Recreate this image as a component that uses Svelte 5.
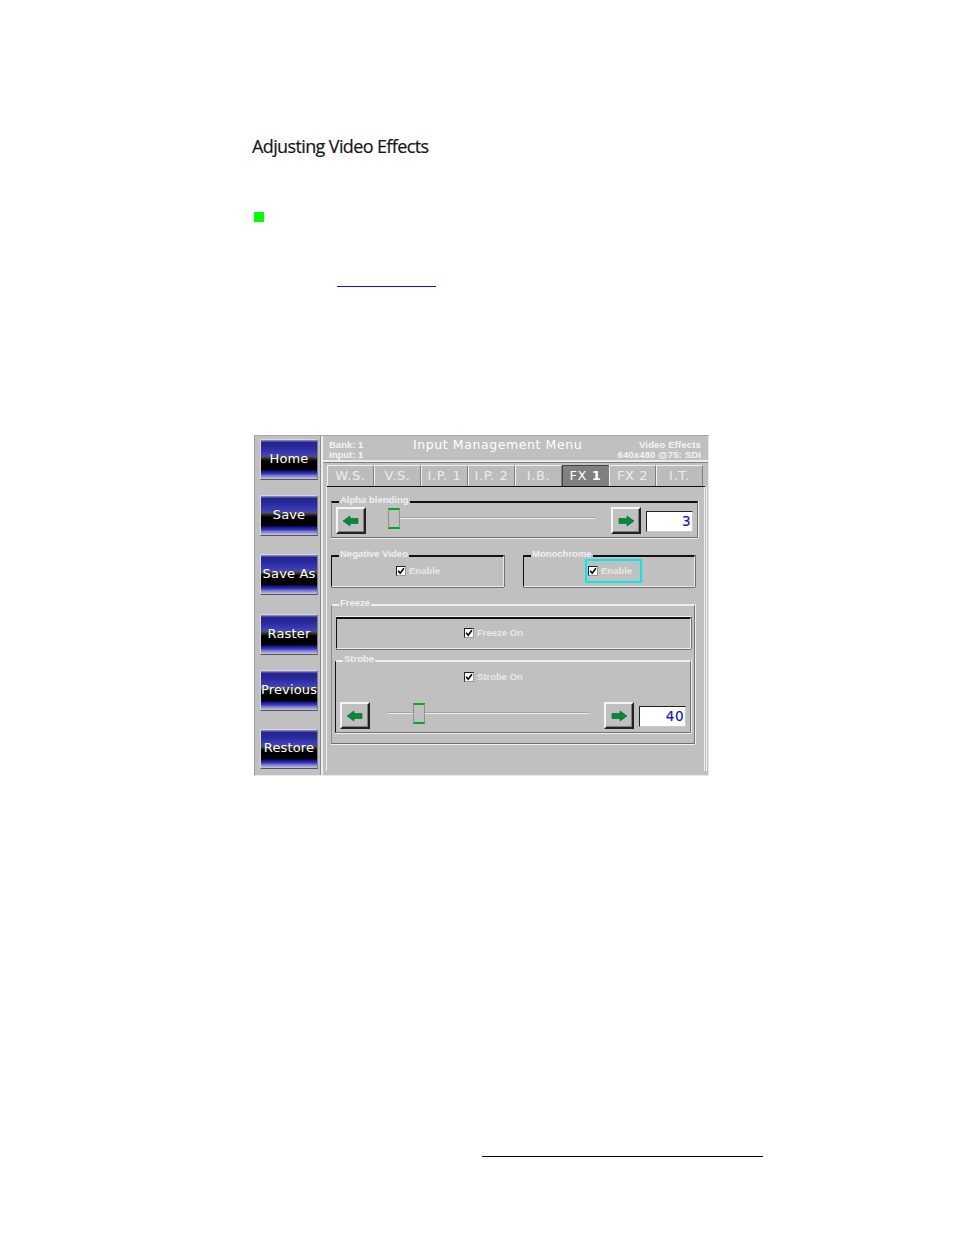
<script>
  const sideButtons = [
    { label: 'Home', height: 41, gap: 3 },
    { label: 'Save', height: 41, gap: 15 },
    { label: 'Save As', height: 41, gap: 18 },
    { label: 'Raster', height: 41, gap: 19 },
    { label: 'Previous', height: 41, gap: 15 },
    { label: 'Restore', height: 40, gap: 18 }
  ];

  const tabs = [
    { label: 'W.S.' },
    { label: 'V.S.' },
    { label: 'I.P. 1' },
    { label: 'I.P. 2' },
    { label: 'I.B.' },
    { label: 'FX', num: '1', active: true },
    { label: 'FX 2' },
    { label: 'I.T.' }
  ];
</script>

{#snippet arrow(dir)}
  <button class="arrow-btn" aria-label={dir}>
    <svg width="18" height="12" viewBox="0 0 18 12">
      {#if dir === 'left'}
        <path d="M1 6 L8 1 L8 3.5 L16 3.5 L16 8.5 L8 8.5 L8 11 Z" fill="#008a3c" stroke="#0b5a2a" stroke-width="0.6" />
      {:else}
        <path d="M17 6 L10 1 L10 3.5 L2 3.5 L2 8.5 L10 8.5 L10 11 Z" fill="#008a3c" stroke="#0b5a2a" stroke-width="0.6" />
      {/if}
    </svg>
  </button>
{/snippet}

{#snippet check(label)}
  <span class="check">
    <span class="box">
      <svg width="8" height="8" viewBox="0 0 8 8"><path d="M1.2 3.8 L3.2 6.2 L6.9 1.2" fill="none" stroke="#000" stroke-width="1.6" /></svg>
    </span>
    {label}
  </span>
{/snippet}

<div class="page">
  <h2>Adjusting Video Effects</h2>
  <div class="bullet"></div>
  <div class="link"></div>

  <div class="panel">
    <aside class="side">
      {#each sideButtons as b}
        <button class="side-btn" style="height:{b.height}px;margin-top:{b.gap}px">{b.label}</button>
      {/each}
    </aside>

    <div class="main">
      <header class="head">
        <div class="head-left">Bank: 1<br />Input: 1</div>
        <div class="title">Input Management Menu</div>
        <div class="head-right">Video Effects<br />640x480 @75: SDI</div>
      </header>

      <nav class="tabs">
        {#each tabs as t}
          <div class="tab" class:active={t.active}>{t.label}{#if t.num}&nbsp;<b>{t.num}</b>{/if}</div>
        {/each}
      </nav>

      <div class="content">
        <fieldset class="group alpha">
          <legend>Alpha blending</legend>
          <div class="slider-row">
            {@render arrow('left')}
            <div class="slider first"><span class="thumb"></span></div>
            {@render arrow('right')}
            <div class="value">3</div>
          </div>
        </fieldset>

        <div class="pair">
          <fieldset class="group small neg">
            <legend>Negative Video</legend>
            {@render check('Enable')}
          </fieldset>
          <fieldset class="group small mono">
            <legend>Monochrome</legend>
            <div class="focus">{@render check('Enable')}</div>
          </fieldset>
        </div>

        <fieldset class="group outer">
          <legend>Freeze</legend>
          <div class="inner freeze">{@render check('Freeze On')}</div>
          <fieldset class="group strobe">
            <legend>Strobe</legend>
            <div class="strobe-check">{@render check('Strobe On')}</div>
            <div class="slider-row">
              {@render arrow('left')}
              <div class="slider second"><span class="thumb"></span></div>
              {@render arrow('right')}
              <div class="value">40</div>
            </div>
          </fieldset>
        </fieldset>
      </div>
    </div>
  </div>

  <div class="rule"></div>
</div>

<style>
  :global(body) {
    margin: 0;
    background: #fff;
  }

  .page {
    box-sizing: border-box;
    width: 954px;
    height: 1235px;
    padding: 136px 0 0 252px;
    font-family: "DejaVu Sans", sans-serif;
    overflow: hidden;
  }

  h2 {
    margin: 0;
    height: 22px;
    font-family: "Open Sans", sans-serif;
    font-size: 18px;
    font-weight: 400;
    line-height: 21px;
    letter-spacing: -0.62px;
    color: #16161c;
    -webkit-text-stroke: 0.2px #16161c;
  }

  .bullet {
    width: 10px;
    height: 10px;
    margin: 54px 0 0 2px;
    background: #00ff00;
  }

  .link {
    width: 99px;
    height: 1px;
    margin: 64px 0 0 85px;
    background: #1010f0;
  }

  .panel {
    box-sizing: border-box;
    display: flex;
    width: 455px;
    height: 341px;
    margin: 148px 0 0 2px;
    background: #c0c0c0;
    border: 1px solid #e8e8e8;
    border-left-color: #a0a0a0;
    border-top-color: #a8a8a8;
    color: #fff;
  }

  .side {
    flex: none;
    box-sizing: border-box;
    display: flex;
    flex-direction: column;
    align-items: flex-start;
    width: 68px;
    padding-left: 5px;
    border-right: 2px solid #eee;
    box-shadow: inset -1px 0 0 #8c8c8c;
  }

  .side-btn {
    box-sizing: border-box;
    width: 58px;
    padding: 0 0 3px;
    border: 1px solid;
    border-color: #d8d8d8 #808080 #555 #d8d8d8;
    background: linear-gradient(
      #9a9ad0 0,
      #24248c 6%,
      #2a2a9c 20%,
      #3c3cc0 36%,
      #50507c 42%,
      #3a3a3a 46%,
      #000 54%,
      #000 76%,
      #14148c 80%,
      #3434b8 86%,
      #8080d0 92%,
      #c8c8d8 100%
    );
    color: #fff;
    font-family: "DejaVu Sans", sans-serif;
    font-size: 13px;
    line-height: 1;
    letter-spacing: 0.15px;
    white-space: nowrap;
    display: flex;
    align-items: center;
    justify-content: center;
  }

  .main {
    flex: 1;
    min-width: 0;
    display: flex;
    flex-direction: column;
  }

  .head {
    box-sizing: border-box;
    display: flex;
    justify-content: space-between;
    height: 26px;
    padding: 4px 7px 0 6px;
    border-bottom: 2px solid #ececec;
    box-shadow: 0 1px 0 #808080;
    font-family: "Liberation Sans", sans-serif;
    font-size: 9.5px;
    line-height: 10px;
    font-weight: 700;
    color: #f4f4f4;
  }

  .head-left {
    width: 84px;
  }

  .title {
    flex: 1;
    margin-top: -2px;
    font-family: "DejaVu Sans", sans-serif;
    font-size: 12.5px;
    line-height: 14px;
    font-weight: 400;
    letter-spacing: 0.58px;
    color: #fff;
    white-space: nowrap;
  }

  .head-right {
    text-align: right;
    white-space: nowrap;
    letter-spacing: 0.15px;
  }

  .tabs {
    display: flex;
    margin: 3px 3px 0 4px;
    height: 21px;
    border-bottom: 1px solid #111;
  }

  .tab {
    box-sizing: border-box;
    width: 47px;
    height: 21px;
    border-left: 1px solid #f0f0f0;
    border-top: 1px solid #f0f0f0;
    border-right: 1px solid #808080;
    text-align: center;
    font-family: "DejaVu Sans", sans-serif;
    font-size: 13px;
    line-height: 20px;
    letter-spacing: 0.6px;
    color: #ececec;
    background: #bcbcbc;
    white-space: nowrap;
  }

  .tab.active {
    background: #808080;
    color: #fff;
    border-left-color: #444;
    border-top-color: #444;
  }

  .content {
    flex: 1;
    box-sizing: border-box;
    margin: 0 1px 4px 3px;
    padding: 10px 0 0 4px;
    border-left: 1px solid #f0f0f0;
    border-right: 3px double #f0f0f0;
  }

  .group {
    box-sizing: border-box;
    margin: 0;
    min-width: 0;
    padding: 0;
    border-style: solid;
    border-width: 2px 1px 1px 1px;
    border-color: #111 #e8e8e8 #e8e8e8 #111;
  }

  legend {
    position: relative;
    top: -2px;
    margin-left: 7px;
    padding: 0 1px;
    height: 10px;
    font-family: "Liberation Sans", sans-serif;
    font-size: 9.5px;
    line-height: 10px;
    font-weight: 700;
    color: #f0f0f0;
    white-space: nowrap;
  }

  .alpha {
    width: 367px;
    height: 41px;
    padding-left: 4px;
    border-left-color: #8a8a8a;
    border-right-color: #707070;
    border-bottom-color: #707070;
    box-shadow: 0 1px 0 #f0f0f0, 1px 0 0 #f0f0f0;
  }

  /* the legend sits in the padding box, so groups with padding pull it back */
  .alpha legend,
  .outer > legend {
    margin-left: 3px;
  }

  .slider-row {
    display: flex;
    align-items: center;
  }

  .arrow-btn {
    box-sizing: border-box;
    flex: none;
    width: 30px;
    height: 27px;
    padding: 0;
    border: 2px solid;
    border-color: #f4f4f4 #222 #222 #f4f4f4;
    background: #c0c0c0;
    box-shadow: inset -1px -1px 0 #808080;
    display: flex;
    align-items: center;
    justify-content: center;
  }

  .slider {
    position: relative;
    height: 1px;
    margin-bottom: 5px;
    background: #efefef;
    box-shadow: 0 -1px 0 #a0a0a0;
  }

  .slider.first {
    flex: none;
    width: 207px;
    margin-left: 22px;
    margin-right: 16px;
  }

  .slider.second {
    flex: none;
    width: 201px;
    margin-left: 18px;
    margin-right: 15px;
  }

  .thumb {
    position: absolute;
    box-sizing: border-box;
    top: -10px;
    width: 12px;
    height: 21px;
    background: #c0c0c0;
    border: 1px solid #909090;
    border-top: 2px solid #00aa20;
    border-bottom: 2px solid #00aa20;
  }

  .first .thumb {
    left: 0;
  }

  .second .thumb {
    left: 25px;
  }

  .value {
    box-sizing: border-box;
    flex: none;
    width: 47px;
    height: 21px;
    margin: 2px 0 0 5px;
    padding-right: 1px;
    background: #fff;
    border: 1px solid;
    border-color: #222 #c8c8c8 #c8c8c8 #222;
    text-align: right;
    font-size: 13.5px;
    line-height: 18px;
    color: #1414c8;
    letter-spacing: 0.5px;
    -webkit-text-stroke: 0.2px #1414c8;
  }

  .pair {
    display: flex;
    gap: 19px;
    margin-top: 13px;
  }

  .small {
    display: block;
    height: 36px;
    box-shadow: 0 1px 0 #707070, 1px 0 0 #707070;
  }

  .neg {
    width: 173px;
  }

  .mono {
    width: 172px;
  }

  .check {
    display: flex;
    align-items: center;
    gap: 3px;
    height: 10px;
    font-family: "Liberation Sans", sans-serif;
    font-size: 9.5px;
    font-weight: 700;
    line-height: 10px;
    color: #e8e8e8;
    white-space: nowrap;
  }

  .box {
    box-sizing: border-box;
    flex: none;
    width: 10px;
    height: 10px;
    background: #fff;
    border: 1px solid;
    border-color: #222 #999 #999 #222;
    display: flex;
    align-items: center;
    justify-content: center;
  }

  .neg .check {
    margin: 5px 0 0 64px;
  }

  .focus {
    box-sizing: border-box;
    width: 57px;
    height: 24px;
    margin: -2px 0 0 61px;
    padding: 5px 0 0 1px;
    border: 2px solid #00eaea;
  }

  .outer {
    width: 364px;
    height: 144px;
    margin-top: 13px;
    padding: 0 4px;
    border-top-color: #efefef;
    border-left-color: #8a8a8a;
    border-right-color: #707070;
    border-bottom-color: #707070;
    box-shadow: 0 1px 0 #f0f0f0, 1px 0 0 #f0f0f0;
  }

  .inner {
    box-sizing: border-box;
    width: 355px;
    height: 32px;
    margin-top: 7px;
    padding: 9px 0 0 127px;
    border-style: solid;
    border-width: 2px 1px 1px 1px;
    border-color: #111 #eee #eee #111;
    box-shadow: 0 -1px 0 #f0f0f0, 0 1px 0 #707070, 1px 0 0 #707070;
  }

  .strobe {
    width: 356px;
    height: 77px;
    margin: 7px 0 0 -1px;
    border-top-color: #efefef;
    border-right-color: #707070;
    border-bottom-color: #707070;
    box-shadow: 0 1px 0 #f0f0f0, 1px 0 0 #f0f0f0;
  }

  .strobe-check {
    margin-top: 6px;
    padding-left: 128px;
  }

  .strobe .slider-row {
    margin-top: 20px;
    padding-left: 4px;
  }

  .rule {
    width: 281px;
    height: 1px;
    margin: 380px 0 0 230px;
    background: #000;
  }
</style>
